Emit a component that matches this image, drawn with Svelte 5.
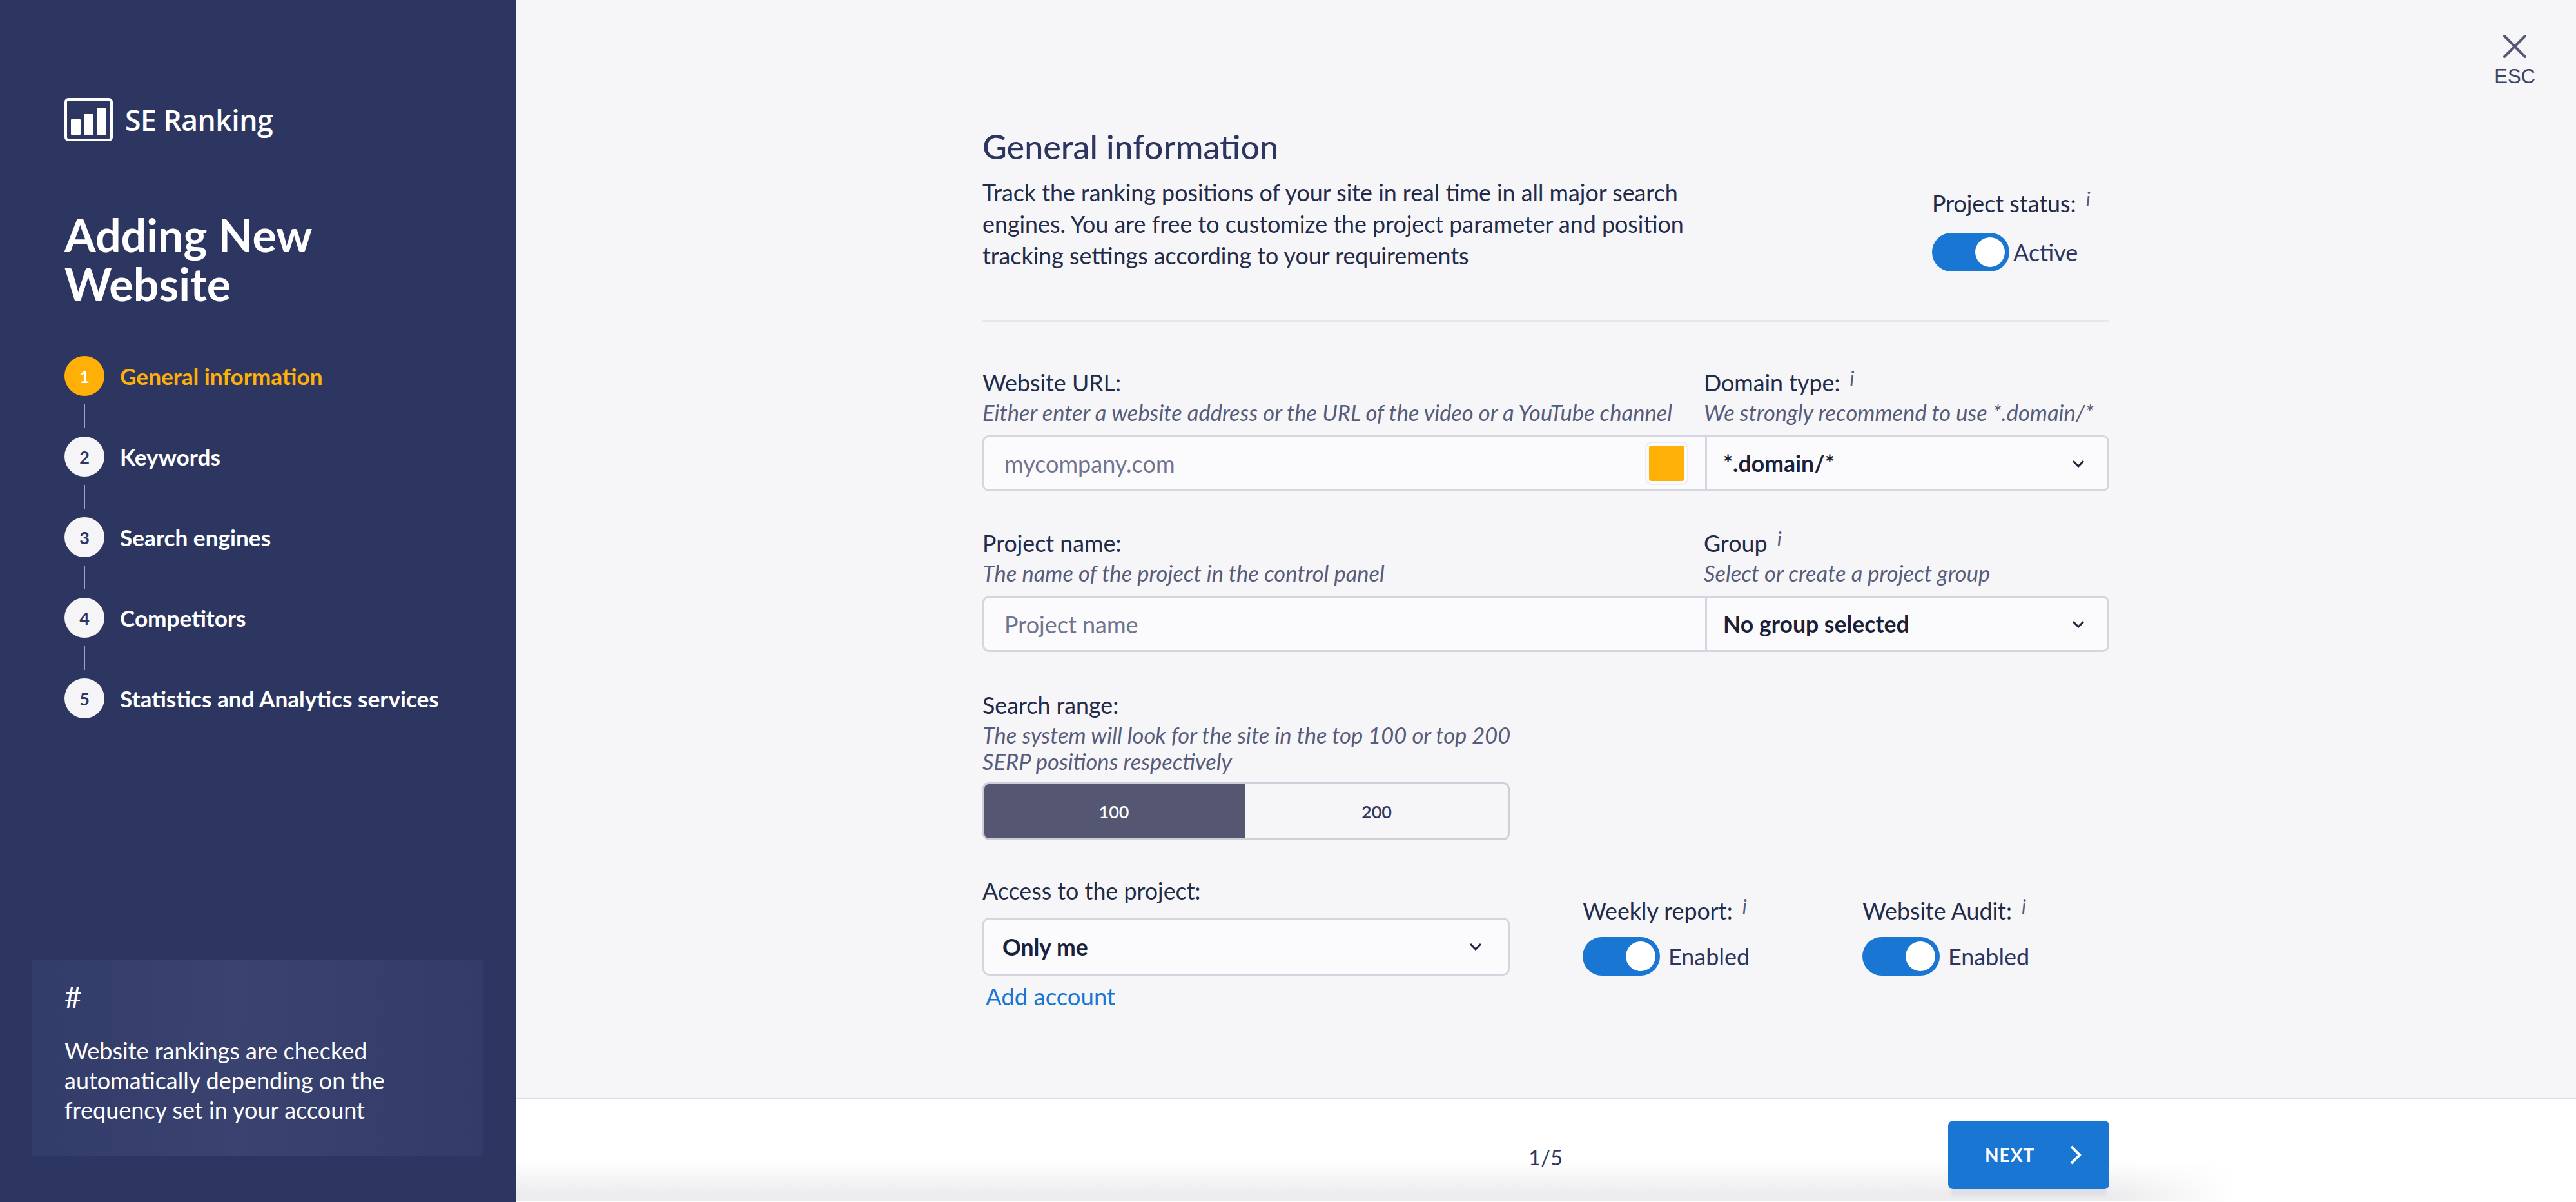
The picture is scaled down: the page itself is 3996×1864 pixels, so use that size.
<script>
  const steps = [
    "General information",
    "Keywords",
    "Search engines",
    "Competitors",
    "Statistics and Analytics services",
  ];
  let enabled = $state({ status: true, weekly: true, audit: true });
  let range = $state(100);
</script>

{#snippet toggle(key, text)}
  <div class="switch">
    <button class="track" class:on={enabled[key]} aria-label={text} onclick={() => (enabled[key] = !enabled[key])}><span class="knob"></span></button>
    <span class="state">{text}</span>
  </div>
{/snippet}

{#snippet chevron()}
  <svg class="chev" width="20" height="12" viewBox="0 0 20 12"><path d="M2 2l8 8 8-8" fill="none" stroke="#1c2340" stroke-width="3"/></svg>
{/snippet}

<div class="page">
  <aside class="side">
    <div class="logo">
      <svg width="75" height="67" viewBox="0 0 75 67">
        <rect x="2" y="2" width="71" height="63" rx="4" fill="none" stroke="#fff" stroke-width="4"/>
        <rect x="10" y="33" width="15" height="24" rx="1" fill="#fff"/>
        <rect x="30" y="25" width="15" height="32" rx="1" fill="#fff"/>
        <rect x="50" y="15" width="15" height="42" rx="1" fill="#fff"/>
      </svg>
      <span>SE Ranking</span>
    </div>
    <h1>Adding New Website</h1>
    <ol class="steps">
      {#each steps as s, i}
        <li class:active={i === 0}><span class="num">{i + 1}</span><span>{s}</span></li>
      {/each}
    </ol>
    <div class="tip">
      <div class="hash">#</div>
      <p>Website rankings are checked automatically depending on the frequency set in your account</p>
    </div>
  </aside>

  <main class="main">
    <button class="close" aria-label="Close">
      <svg width="36" height="36" viewBox="0 0 36 36"><path d="M2 2l32 32M34 2L2 34" stroke="#565875" stroke-width="4" stroke-linecap="round"/></svg>
      <span>ESC</span>
    </button>

    <div class="content">
      <section class="intro">
        <div>
          <h2>General information</h2>
          <p>Track the ranking positions of your site in real time in all major search engines. You are free to customize the project parameter and position tracking settings according to your requirements</p>
        </div>
        <div class="status">
          <div class="label">Project status: <i>i</i></div>
          {@render toggle("status", "Active")}
        </div>
      </section>

      <section class="row url">
        <div><div class="label">Website URL:</div><div class="hint">Either enter a website address or the URL of the video or a YouTube channel</div></div>
        <div><div class="label">Domain type: <i>i</i></div><div class="hint">We strongly recommend to use *.domain/*</div></div>
        <div class="joined">
          <div class="cell"><span class="ph">mycompany.com</span><span class="swatch"></span></div>
          <div class="cell sel"><b>*.domain/*</b>{@render chevron()}</div>
        </div>
      </section>

      <section class="row name">
        <div><div class="label">Project name:</div><div class="hint">The name of the project in the control panel</div></div>
        <div><div class="label">Group <i>i</i></div><div class="hint">Select or create a project group</div></div>
        <div class="joined">
          <div class="cell"><span class="ph">Project name</span></div>
          <div class="cell sel"><b>No group selected</b>{@render chevron()}</div>
        </div>
      </section>

      <section class="range">
        <div class="label">Search range:</div>
        <div class="hint wide">The system will look for the site in the top 100 or top 200 SERP positions respectively</div>
        <div class="seg">
          <button class:sel={range === 100} onclick={() => (range = 100)}>100</button>
          <button class:sel={range === 200} onclick={() => (range = 200)}>200</button>
        </div>
      </section>

      <section class="access">
        <div class="who">
          <div class="label">Access to the project:</div>
          <div class="box"><b>Only me</b>{@render chevron()}</div>
          <a href="#add" class="add">Add account</a>
        </div>
        <div class="opt">
          <div class="label">Weekly report: <i>i</i></div>
          {@render toggle("weekly", "Enabled")}
        </div>
        <div class="opt">
          <div class="label">Website Audit: <i>i</i></div>
          {@render toggle("audit", "Enabled")}
        </div>
      </section>
    </div>

    <footer class="foot">
      <div class="foot-in">
        <span class="count">1/5</span>
        <button class="next">
          <span>NEXT</span>
          <svg width="20" height="32" viewBox="0 0 20 32"><path d="M3 3l13 13L3 29" fill="none" stroke="#fff" stroke-width="4"/></svg>
        </button>
      </div>
    </footer>
  </main>
</div>

<style>
  :global(body) { margin: 0; }
  * { box-sizing: border-box; }
  .page {
    display: flex; width: 3996px; height: 1864px; overflow: hidden;
    font-family: Lato, "Liberation Sans", sans-serif; color: #232b48;
  }

  /* sidebar */
  .side {
    width: 800px; flex: none; background: #2d3660; color: #fff;
    display: flex; flex-direction: column; padding: 152px 50px 72px 100px;
  }
  .logo { display: flex; align-items: center; gap: 19px; height: 67px; }
  .logo span { font: 600 44.5px "Open Sans", sans-serif; letter-spacing: -.5px; }
  h1 { font-size: 70px; line-height: 76px; font-weight: 700; margin: 107px 0 0; width: 500px; }
  .steps { list-style: none; margin: 74px 0 0; padding: 0; }
  .steps li {
    position: relative; display: flex; align-items: center; gap: 24px;
    height: 62px; margin-bottom: 63px; font-size: 35.2px; font-weight: 700;
  }
  .steps li:not(:last-child)::after {
    content: ""; position: absolute; left: 30px; top: 75px; width: 2px; height: 37px; background: #a0a4b8;
  }
  .num {
    width: 62px; height: 62px; border-radius: 50%; background: #f5f5f8; color: #2d3660;
    display: grid; place-items: center; font-size: 27px;
  }
  .active { color: #ffb007; }
  .active .num { background: #ffb007; color: #fff; }
  .tip {
    margin: auto 0 0 -50px; width: 700px; height: 303px; padding: 30px 50px;
    background: linear-gradient(90deg, #333d69, #3a4270 45%, #333c68); border-radius: 3px;
  }
  .hash { font-size: 46px; line-height: 54px; }
  .tip p { margin: 33px 0 0; font-size: 36px; line-height: 46px; width: 560px; }

  /* main */
  .main { position: relative; flex: 1; display: flex; flex-direction: column; background: #f6f6f9; }
  .close {
    position: absolute; right: 63px; top: 54px; background: none; border: 0; padding: 0;
    display: flex; flex-direction: column; align-items: center; gap: 14px; color: #3c4463;
    font: 31px/30px "Liberation Sans", sans-serif;
  }
  .content { flex: 1; width: 1748px; margin: 0 auto; padding-top: 195px; }
  .intro {
    display: flex; justify-content: space-between; height: 304px;
    border-bottom: 3px solid #e6e6ed;
  }
  h2 { font-size: 52px; line-height: 64px; font-weight: 500; color: #2d3660; margin: 0 0 15px; }
  .intro p { margin: 0; width: 1150px; font-size: 35.8px; line-height: 49px; }
  .status { width: 275px; padding-top: 99px; }
  .status .label { margin-bottom: 23px; }
  .label { font-size: 35.8px; line-height: 44px; white-space: nowrap; }
  .label i { line-height: 0; vertical-align: 9px; font-size: 30px; color: #565b7b; margin-left: 6px; }
  .hint { font-size: 34.5px; line-height: 41px; font-style: italic; color: #575c7a; margin-top: 3px; }
  .hint.wide { margin-right: -20px; }

  .switch { display: flex; align-items: center; gap: 6px; }
  .track {
    width: 120px; height: 60px; border: 0; border-radius: 30px; background: #b9bccb; padding: 7px;
    display: flex;
  }
  .track.on { background: #1976d2; justify-content: flex-end; }
  .knob { width: 46px; height: 46px; border-radius: 50%; background: #fff; }
  .state { font-size: 36px; color: #2d3660; }

  .row { display: grid; grid-template-columns: 1119px 629px; }
  .url { margin-top: 73px; }
  .name { margin-top: 59px; }
  .joined {
    grid-column: 1 / -1; display: grid; grid-template-columns: 1118px 1fr; height: 87px; margin-top: 15px;
    background: #fbfbfd; border: 3px solid #d5d5e2; border-radius: 10px;
  }
  .cell { display: flex; align-items: center; justify-content: space-between; padding: 0 32px 0 31px; }
  .cell.sel { border-left: 3px solid #d5d5e2; padding: 0 35px 0 25px; }
  .ph { font-size: 36px; color: #70748c; }
  b { font-size: 35.6px; font-weight: 700; color: #1a2138; }
  .chev { flex: none; }
  .swatch {
    width: 55px; height: 55px; border-radius: 4px; background: #ffb007;
    box-shadow: 0 0 0 4px #fbfbfd, 0 0 0 6px #ececf1;
  }

  .range { margin-top: 61px; width: 818px; }
  .seg {
    display: grid; grid-template-columns: 405px 1fr; height: 90px; margin-top: 12px;
    border: 3px solid #cdced9; border-radius: 10px; overflow: hidden; background: #f6f6f9;
  }
  .seg button { border: 0; background: none; font: 600 27px Lato, sans-serif; color: #2d3660; }
  .seg button.sel { background: #555672; color: #fff; margin: -3px 0 -3px -3px; }

  .access { display: flex; margin-top: 57px; }
  .who { width: 818px; flex: none; }
  .box {
    display: flex; align-items: center; justify-content: space-between;
    height: 90px; margin-top: 19px; padding: 0 40px 0 28px;
    background: #fbfbfd; border: 3px solid #d5d5e2; border-radius: 10px;
  }
  .add { display: block; margin: 10px 0 0 5px; font-size: 36.5px; line-height: 44px; color: #1976d2; text-decoration: none; }
  .opt { padding-top: 31px; width: 434px; flex: none; }
  .who + .opt { margin-left: 113px; }
  .opt .label { margin-bottom: 18px; }
  .opt .switch { gap: 13px; }

  .foot {
    position: relative; flex: none; height: 162px; border-top: 3px solid #dcdce6; background: #fff;
  }
  /* soft grey band along the bottom edge */
  .foot::after {
    content: ""; position: absolute; left: 0; bottom: 2px; width: 2670px; height: 62px;
    background: linear-gradient(180deg, #fff, #ececee 85%);
    -webkit-mask-image: linear-gradient(90deg, #000 2480px, transparent);
    mask-image: linear-gradient(90deg, #000 2480px, transparent);
  }
  .foot-in {
    position: relative; z-index: 1; width: 1748px; height: 100%; margin: 0 auto;
    display: flex; align-items: center; padding-top: 13px;
  }
  .count { margin: 6px 0 0 847px; font-size: 33px; color: #2d3660; }
  .next {
    width: 250px; height: 106px; margin-left: auto; border: 0; border-radius: 8px; background: #1976d2; color: #fff;
    display: flex; align-items: center; gap: 54px; padding: 0 0 0 57px;
    font: 700 28px Lato, sans-serif; letter-spacing: 1px;
    box-shadow: 0 14px 5px -4px #dfdfe8;
  }
</style>
